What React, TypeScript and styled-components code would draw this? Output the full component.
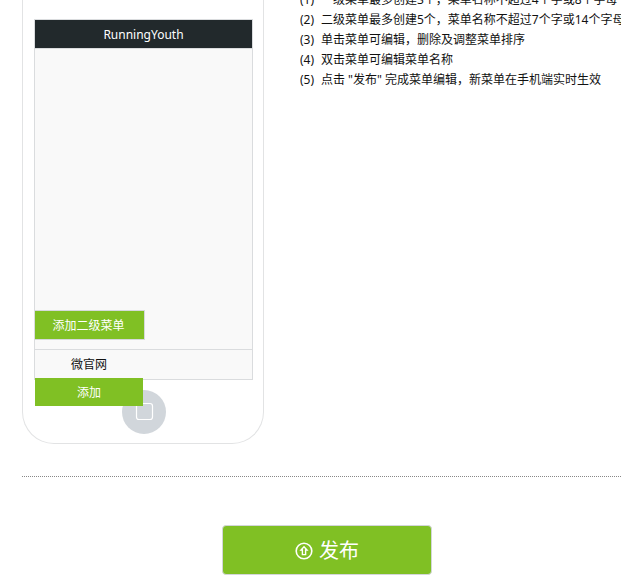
import React from "react";
import styled, { createGlobalStyle } from "styled-components";

const GlobalStyle = createGlobalStyle`
  *, *::before, *::after { box-sizing: border-box; }
  body {
    margin: 0;
    background: #fff;
    color: #111;
    font: 12px/20px "Noto Sans", "Noto Sans CJK SC", sans-serif;
    overflow: hidden;
  }
  button { font: inherit; color: inherit; cursor: pointer; }
`;

const Page = styled.main`
  padding-left: 22px;
`;

const Workspace = styled.section`
  display: flex;
  align-items: flex-start;
  gap: 36px;
  padding-bottom: 32px;
  border-bottom: 1px dotted #888;
`;

const Phone = styled.div`
  flex: 0 0 242px;
  display: flex;
  flex-direction: column;
  align-items: center;
  padding: 19px 10px 9px 11px;
  border: 1px solid #e2e3e4;
  border-top: 0;
  border-radius: 0 0 32px 32px;
`;

const Screen = styled.div`
  position: relative;
  align-self: stretch;
  background: #f9f9f9;
  border: 1px solid #dadcde;
`;

const ScreenTitle = styled.h1`
  margin: 0;
  height: 29px;
  border-bottom: 1px solid #dadcde;
  background: #22292c;
  color: #fff;
  font-size: 12px;
  font-weight: 400;
  line-height: 30px;
  text-align: center;
`;

const Canvas = styled.div`
  display: flex;
  flex-direction: column;
  align-items: flex-start;
  justify-content: flex-end;
  height: 300px;
  padding-bottom: 9px;
`;

const SubmenuButton = styled.button`
  width: 110px;
  height: 30px;
  padding: 2px 2px 0 0;
  border: 1px solid #d6d9dc;
  border-left: 0;
  background: #80c024;
  color: #fff;
`;

const MenuBar = styled.nav`
  display: flex;
  height: 30px;
  border-top: 1px solid #dadcde;
`;

const MenuItem = styled.button`
  width: 108px;
  padding: 0;
  border: 0;
  background: transparent;
`;

const AddButton = styled.button`
  position: absolute;
  left: 0;
  top: calc(100% - 1px);
  width: 108px;
  height: 28px;
  padding: 2px 0 0;
  border: 0;
  background: #80c024;
  color: #fff;
`;

const HomeKey = styled.div`
  display: flex;
  margin-top: 10px;
`;

const Rules = styled.ol`
  flex: 1;
  min-width: 0;
  margin: -10px 0 0;
  padding: 0;
  list-style: none;
  white-space: nowrap;
  overflow: hidden;
`;

const Rule = styled.li`
  display: flex;
`;

const RuleNumber = styled.span`
  flex: 0 0 21px;
`;

const Actions = styled.footer`
  display: flex;
  padding: 48px 0 8px 200px;
`;

const PublishButton = styled.button`
  display: flex;
  align-items: center;
  justify-content: center;
  gap: 6px;
  width: 210px;
  height: 50px;
  padding: 2px 0 0;
  border: 1px solid #d3d6d9;
  border-radius: 4px;
  background: #80c024;
  color: #fff;
  font-size: 20px;
`;

const rules = [
  "一级菜单最多创建3个，菜单名称不超过4个字或8个字母",
  "二级菜单最多创建5个，菜单名称不超过7个字或14个字母",
  "单击菜单可编辑，删除及调整菜单排序",
  "双击菜单可编辑菜单名称",
  "点击 \"发布\" 完成菜单编辑，新菜单在手机端实时生效",
];

function HomeIcon() {
  return (
    <svg width="44" height="44" viewBox="0 0 44 44" aria-hidden="true">
      <circle cx="22" cy="22" r="22" fill="#d1d6db" />
      <rect x="14.5" y="13.5" width="16" height="16" rx="2.5" fill="none" stroke="#fff" strokeWidth="1.2" />
    </svg>
  );
}

function PublishIcon() {
  return (
    <svg width="18" height="18" viewBox="0 0 18 18" fill="none" stroke="#fff" aria-hidden="true">
      <circle cx="9" cy="9" r="7.8" strokeWidth="1.6" />
      <path d="M9 4.8 L12 8 H10.6 V12.6 H7.4 V8 H6 Z" strokeWidth="1.4" />
    </svg>
  );
}

export default function App() {
  return (
    <>
      <GlobalStyle />
      <Page>
        <Workspace>
          <Phone>
            <Screen>
              <ScreenTitle>RunningYouth</ScreenTitle>
              <Canvas>
                <SubmenuButton type="button">添加二级菜单</SubmenuButton>
              </Canvas>
              <MenuBar>
                <MenuItem type="button">微官网</MenuItem>
              </MenuBar>
              <AddButton type="button">添加</AddButton>
            </Screen>
            <HomeKey>
              <HomeIcon />
            </HomeKey>
          </Phone>
          <Rules>
            {rules.map((text, index) => (
              <Rule key={text}>
                <RuleNumber>({index + 1})</RuleNumber>
                <span>{text}</span>
              </Rule>
            ))}
          </Rules>
        </Workspace>
        <Actions>
          <PublishButton type="button">
            <PublishIcon />
            <span>发布</span>
          </PublishButton>
        </Actions>
      </Page>
    </>
  );
}
